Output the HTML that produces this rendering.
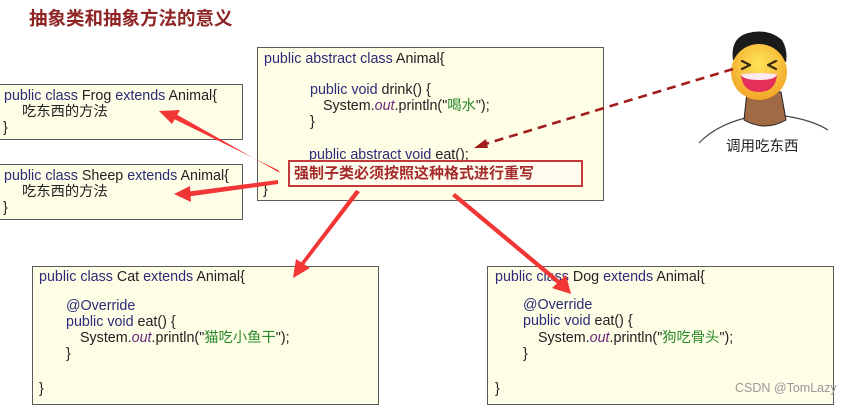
<!DOCTYPE html>
<html><head><meta charset="utf-8"><style>
html,body{margin:0;padding:0;width:848px;height:406px;background:#fff;overflow:hidden;position:relative;font-family:"Liberation Sans","Noto Sans CJK SC",sans-serif;}
.box{position:absolute;background:#fefde6;border:1.5px solid #5a5a5a;box-sizing:border-box;}
.t{position:absolute;font-size:14.3px;color:#222;white-space:nowrap;line-height:16px;}
.k{color:#2b2b78}
.o{color:#6a2a7a;font-style:italic}
.s{color:#2a8a2a}
</style></head><body>
<div style="position:absolute;left:29px;top:5px;font-size:18.5px;font-weight:bold;color:#8e2424;font-family:'Noto Sans CJK SC',sans-serif;">抽象类和抽象方法的意义</div>

<div class="box" style="left:257px;top:47px;width:347px;height:154px;"></div>
<div class="box" style="left:-2px;top:84px;width:245px;height:56px;"></div>
<div class="box" style="left:-2px;top:164px;width:245px;height:56px;"></div>
<div class="box" style="left:32px;top:266px;width:347px;height:139px;"></div>
<div class="box" style="left:487px;top:266px;width:347px;height:139px;"></div>

<div class="t" style="left:264px;top:51px;"><span class="k">public abstract class</span> Animal{</div>
<div class="t" style="left:310px;top:82px;"><span class="k">public void</span> drink() {</div>
<div class="t" style="left:323px;top:98px;">System.<span class="o">out</span>.println("<span class="s">喝水</span>");</div>
<div class="t" style="left:310px;top:114px;">}</div>
<div class="t" style="left:309px;top:147px;"><span class="k">public abstract void</span> eat();</div>
<div class="t" style="left:263px;top:182px;">}</div>
<div style="position:absolute;left:288px;top:160px;width:295px;height:27px;box-sizing:border-box;border:2px solid #c43a3a;background:#fefdf0;"></div>
<div style="position:absolute;left:294px;top:162px;font-size:15px;color:#a52a2a;font-weight:bold;font-family:'Noto Sans CJK SC',sans-serif;white-space:nowrap;">强制子类必须按照这种格式进行重写</div>

<div class="t" style="left:4px;top:88px;"><span class="k">public class</span> Frog <span class="k">extends</span> Animal{</div>
<div class="t" style="left:22px;top:104px;">吃东西的方法</div>
<div class="t" style="left:3px;top:120px;">}</div>
<div class="t" style="left:4px;top:168px;"><span class="k">public class</span> Sheep <span class="k">extends</span> Animal{</div>
<div class="t" style="left:22px;top:184px;">吃东西的方法</div>
<div class="t" style="left:3px;top:200px;">}</div>

<div class="t" style="left:39px;top:269px;"><span class="k">public class</span> Cat <span class="k">extends</span> Animal{</div>
<div class="t" style="left:66px;top:298px;"><span class="k">@Override</span></div>
<div class="t" style="left:66px;top:314px;"><span class="k">public void</span> eat() {</div>
<div class="t" style="left:80px;top:330px;">System.<span class="o">out</span>.println("<span class="s">猫吃小鱼干</span>");</div>
<div class="t" style="left:66px;top:346px;">}</div>
<div class="t" style="left:39px;top:381px;">}</div>

<div class="t" style="left:495px;top:269px;"><span class="k">public class</span> Dog <span class="k">extends</span> Animal{</div>
<div class="t" style="left:523px;top:297px;"><span class="k">@Override</span></div>
<div class="t" style="left:523px;top:313px;"><span class="k">public void</span> eat() {</div>
<div class="t" style="left:538px;top:330px;">System.<span class="o">out</span>.println("<span class="s">狗吃骨头</span>");</div>
<div class="t" style="left:523px;top:346px;">}</div>
<div class="t" style="left:495px;top:381px;">}</div>
<div style="position:absolute;left:735px;top:381px;font-size:12.5px;color:#999;white-space:nowrap;">CSDN @TomLazy</div>

<div style="position:absolute;left:726px;top:135px;font-size:14.5px;color:#222;font-family:'Noto Sans CJK SC',sans-serif;">调用吃东西</div>

<svg width="848" height="406" style="position:absolute;left:0;top:0;">
<path d="M699 143 Q715 126 745 118 M785 116 Q812 120 828 130" fill="none" stroke="#444" stroke-width="1.2"/>
<path d="M747 92 L744 120 Q765 132 786 120 L781 92 Z" fill="#a06a45" stroke="#222" stroke-width="1"/>
<path d="M733 60 Q730 38 748 33 Q768 28 782 40 Q788 50 786 62 Z" fill="#1a1a1a"/>
<defs><radialGradient id="g" cx="50%" cy="35%" r="65%"><stop offset="0" stop-color="#ffe45a"/><stop offset="1" stop-color="#f3a528"/></radialGradient></defs>
<circle cx="759" cy="72" r="28" fill="url(#g)"/>
<path d="M742 61 L750 65 L742 69 M776 61 L768 65 L776 69" fill="none" stroke="#3a2a10" stroke-width="2.2" stroke-linecap="round" stroke-linejoin="round"/>
<path d="M741 74 Q759 72 777 74 Q776 92 759 92 Q742 92 741 74 Z" fill="#e6305a"/>
<path d="M741 74 Q759 72 777 74 Q776 80 759 80 Q742 80 741 74 Z" fill="#fff" opacity=".9"/>
<line x1="733" y1="69" x2="482" y2="145" stroke="#a31c1c" stroke-width="2.6" stroke-dasharray="9,6"/>
<polygon points="474,148 486,139 488,148" fill="#a31c1c"/>
<g fill="#f23535">
<polygon points="278,170 172,118 174,113 280,173"/>
<polygon points="159,111 180,110 172,124"/>
<polygon points="278,180 185,192 185,197 278,184"/>
<polygon points="174,194 190,186 191,202"/>
<polygon points="360,192 303,266 300,264 356,190"/>
<polygon points="293,278 296,259 310,268"/>
<polygon points="455,193 563,283 560,286 452,196"/>
<polygon points="571,294 552,288 566,275"/>
</g>
</svg>
</body></html>
